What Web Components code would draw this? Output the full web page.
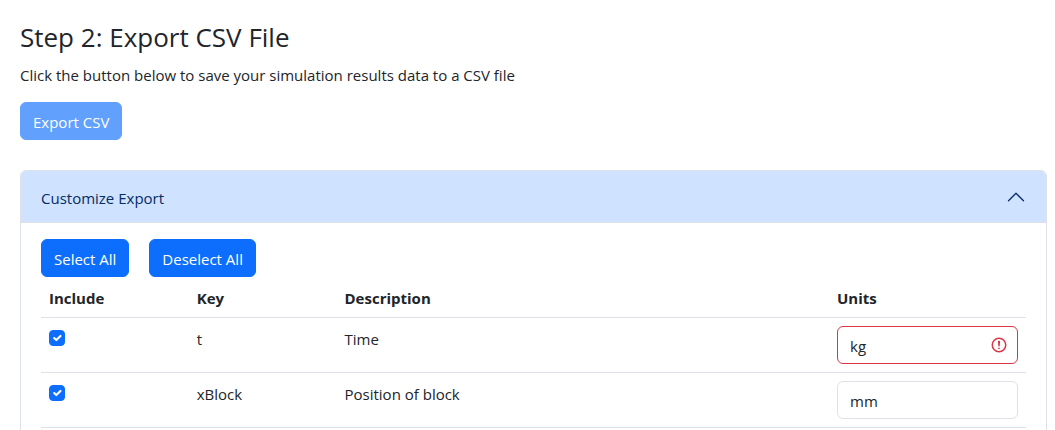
<!DOCTYPE html>
<html lang="en">
<head>
<meta charset="utf-8">
<meta name="viewport" content="width=device-width, initial-scale=1">
<title>Export CSV File</title>
<style>
  body {
    margin: 0;
    background: #fff;
    color: #212529;
    font: 370 15px/24px "Open Sans", "Noto Sans", sans-serif;
  }
</style>
</head>
<body>
<export-step>
  <span slot="title">Step 2: Export CSV File</span>
  <span slot="lead">Click the button below to save your simulation results data to a CSV file</span>
  <app-button slot="action" disabled>Export CSV</app-button>
  <accordion-panel>
    <span slot="header">Customize Export</span>
    <button-row>
      <app-button>Select All</app-button>
      <app-button>Deselect All</app-button>
    </button-row>
    <export-table></export-table>
  </accordion-panel>
</export-step>

<template id="export-step">
  <style>
    :host { display: block; padding: 20px 8px 20px 20px; }
    h3 { margin: 0 0 9px; font-size: 26px; line-height: 34px; font-weight: inherit; }
    p { margin: 0 0 15px; }
    .action { display: flex; margin-bottom: 30px; }
  </style>
  <h3><slot name="title"></slot></h3>
  <p><slot name="lead"></slot></p>
  <div class="action"><slot name="action"></slot></div>
  <slot></slot>
</template>

<template id="app-button">
  <style>
    :host { display: inline-block; }
    button {
      display: block; box-sizing: border-box; margin: 0; padding: 7px 12px 5px;
      border: 1px solid #0d6efd; border-radius: 6px;
      background: #0d6efd; color: #fff; font: inherit; cursor: pointer;
    }
    button:disabled { opacity: .65; cursor: default; }
  </style>
  <button type="button"><slot></slot></button>
</template>

<template id="button-row">
  <style>:host { display: flex; gap: 20px; }</style>
  <slot></slot>
</template>

<template id="accordion-panel">
  <style>
    :host { display: block; border: 1px solid #dee2e6; border-radius: 6px; }
    h2 { margin: 0; font: inherit; }
    button {
      display: flex; align-items: center; justify-content: space-between;
      width: 100%; height: 52px; margin: 0; padding: 0 20px;
      border: 0; border-bottom: 1px solid #dee2e6; border-radius: 5px 5px 0 0;
      background: #cfe2ff; color: #052c65; font: inherit; text-align: left; cursor: pointer;
    }
    button:not([aria-expanded="true"]) svg { transform: rotate(180deg); }
    .label { padding-top: 2px; }
    svg { width: 20px; height: 20px; flex: none; }
    .body { padding: 16px 20px; }
  </style>
  <h2>
    <button type="button" aria-expanded="true" aria-controls="body">
      <span class="label"><slot name="header"></slot></span>
      <svg viewBox="0 0 16 16" fill="none" stroke="#052c65" stroke-linecap="round" stroke-linejoin="round" aria-hidden="true"><path d="m14 11-6-6-6 6"/></svg>
    </button>
  </h2>
  <div class="body" id="body"><slot></slot></div>
</template>

<template id="export-table">
  <style>
    :host { display: block; }
    table { width: 100%; border-collapse: separate; border-spacing: 0; table-layout: fixed; }
    th, td { box-sizing: border-box; padding: 9px 8px 7px; border-bottom: 1px solid #dee2e6; text-align: left; vertical-align: top; }
    th { font-weight: 700; }
    td.control { padding: 8px; }
    .narrow { width: 15%; }
    .wide { width: 50%; }
    .units { width: 20%; }
    input[type="checkbox"] {
      appearance: none; display: block; box-sizing: border-box;
      width: 16px; height: 16px; margin: 4px 0 0;
      border: 1px solid #dee2e6; border-radius: 4px; background: #fff;
    }
    input[type="checkbox"]:checked {
      border-color: #0d6efd;
      background: #0d6efd url("data:image/svg+xml,%3csvg xmlns='http://www.w3.org/2000/svg' viewBox='0 0 20 20'%3e%3cpath fill='none' stroke='%23fff' stroke-linecap='round' stroke-linejoin='round' stroke-width='3' d='m6 10 3 3 6-6'/%3e%3c/svg%3e") center / contain no-repeat;
    }
    input[type="text"] {
      display: block; box-sizing: border-box; width: 100%; height: 38px; margin: 0; padding: 7px 12px 5px;
      border: 1px solid #dee2e6; border-radius: 6px; background: #fff; color: inherit; font: inherit;
    }
    input[aria-invalid="true"] {
      padding-right: 36px; border-color: #dc3545;
      background: #fff url("data:image/svg+xml,%3csvg xmlns='http://www.w3.org/2000/svg' viewBox='0 0 12 12' width='12' height='12' fill='none' stroke='%23dc3545'%3e%3ccircle cx='6' cy='6' r='4.5'/%3e%3cpath stroke-linejoin='round' d='M5.8 3.6h.4L6 6.5z'/%3e%3ccircle cx='6' cy='8.2' r='.6' fill='%23dc3545' stroke='none'/%3e%3c/svg%3e") right 9px center / 18px 18px no-repeat;
    }
  </style>
  <table>
    <thead>
      <tr>
        <th class="narrow" scope="col">Include</th>
        <th class="narrow" scope="col">Key</th>
        <th class="wide" scope="col">Description</th>
        <th class="units" scope="col">Units</th>
      </tr>
    </thead>
    <tbody>
      <tr>
        <td class="control"><input type="checkbox" aria-label="Include t" checked></td>
        <td>t</td>
        <td>Time</td>
        <td class="control"><input type="text" aria-label="Units of t" aria-invalid="true" value="kg"></td>
      </tr>
      <tr>
        <td class="control"><input type="checkbox" aria-label="Include xBlock" checked></td>
        <td>xBlock</td>
        <td>Position of block</td>
        <td class="control"><input type="text" aria-label="Units of xBlock" value="mm"></td>
      </tr>
    </tbody>
  </table>
</template>

<script>
  class TemplateElement extends HTMLElement {
    constructor() {
      super();
      const template = document.getElementById(this.localName);
      this.attachShadow({ mode: 'open' }).append(template.content.cloneNode(true));
    }
  }

  class AppButton extends TemplateElement {
    connectedCallback() {
      this.shadowRoot.querySelector('button').disabled = this.hasAttribute('disabled');
    }
  }

  class AccordionPanel extends TemplateElement {
    connectedCallback() {
      const button = this.shadowRoot.querySelector('button');
      const body = this.shadowRoot.querySelector('.body');
      button.onclick = () => {
        body.hidden = !body.hidden;
        button.setAttribute('aria-expanded', String(!body.hidden));
      };
    }
  }

  customElements.define('export-step', class extends TemplateElement {});
  customElements.define('app-button', AppButton);
  customElements.define('button-row', class extends TemplateElement {});
  customElements.define('accordion-panel', AccordionPanel);
  customElements.define('export-table', class extends TemplateElement {});
</script>
</body>
</html>
